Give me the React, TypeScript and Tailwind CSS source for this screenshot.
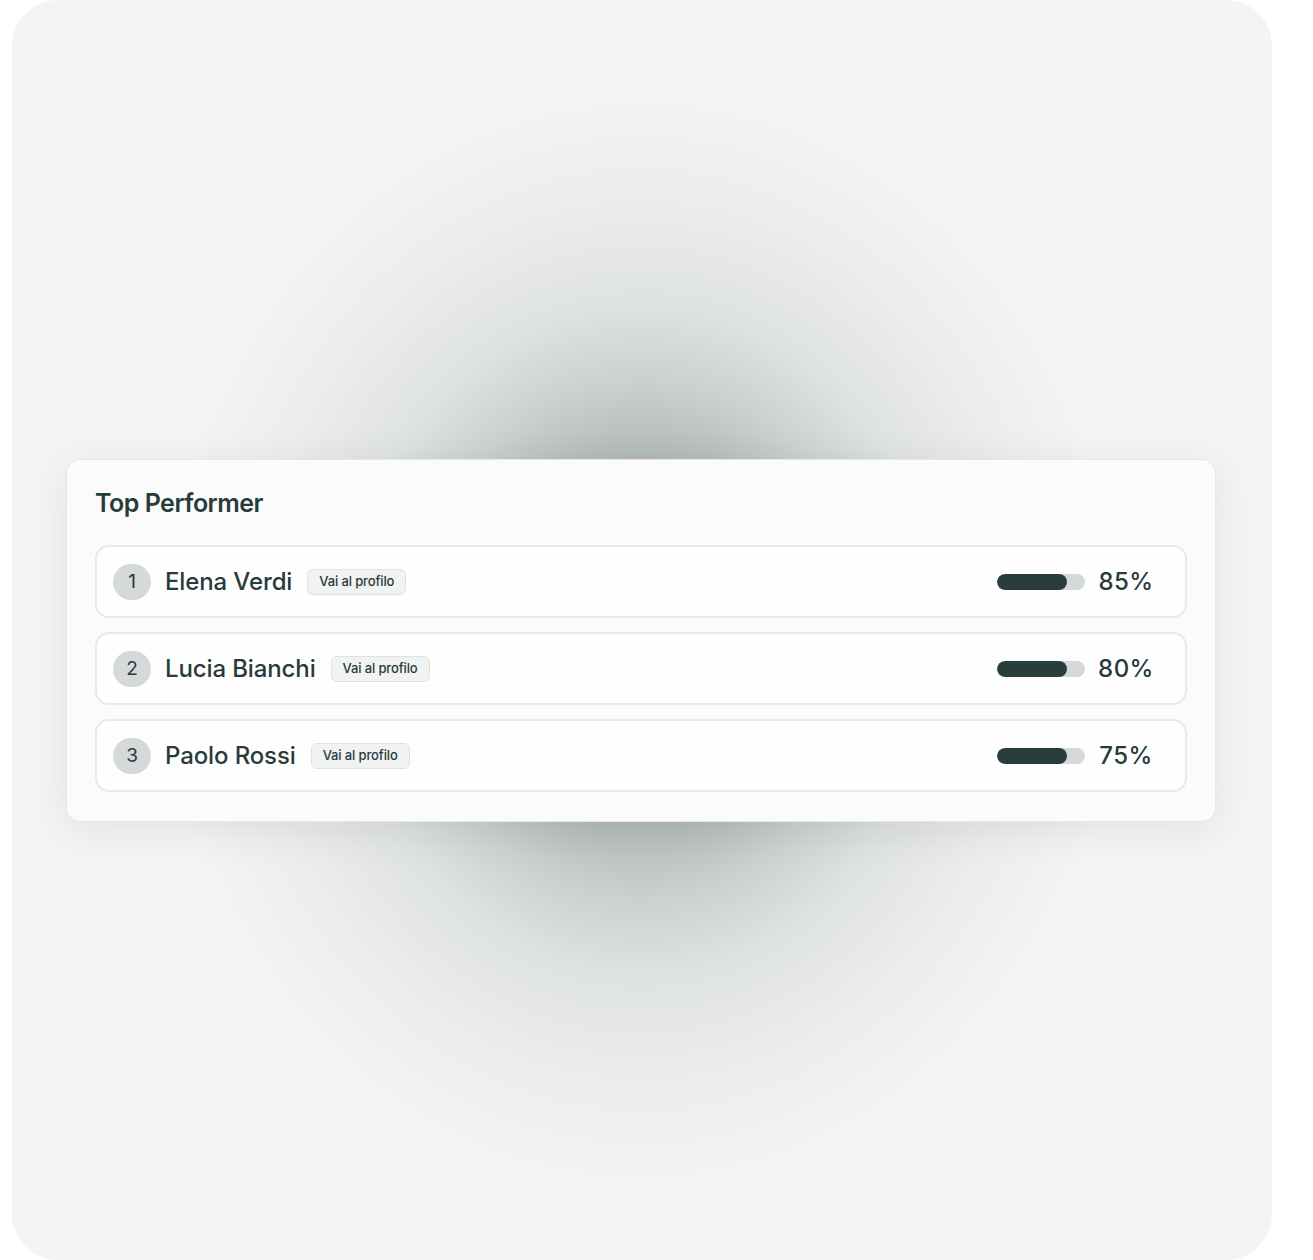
import React from "react";

const people = [
  { rank: 1, name: "Elena Verdi", pct: "85%" },
  { rank: 2, name: "Lucia Bianchi", pct: "80%" },
  { rank: 3, name: "Paolo Rossi", pct: "75%" },
];

export default function App() {
  return (
    <div className="min-h-[1260px] w-[1313px] bg-white" style={{ fontFamily: "Inter, 'Noto Sans', sans-serif" }}>
      <div className="ml-[12px] flex h-[1260px] w-[1260px] flex-col items-center justify-center rounded-[46px] bg-[#f3f4f3] bg-[radial-gradient(ellipse_480px_550px_at_629px_640px,#8f9999_0%,#b2b9b9_33%,#cbd0d0_47%,#dfe2e2_61%,#ebedec_80%,#f3f4f3_100%)] pt-[21px]">
        <div className="-ml-[2px] w-[1150px] rounded-[14px] border border-[#e6e8e8] bg-[#fbfbfb] px-[28px] pb-[29px] pt-[27px] shadow-[0_8px_40px_rgba(0,0,0,0.08)]">
          <h2 className="text-[25px] font-semibold leading-[32px] tracking-[-0.02em] text-[#283b3b]">Top Performer</h2>
          <div className="mt-[26px] flex flex-col gap-[14px]">
            {people.map((p) => (
              <div
                key={p.rank}
                className="flex h-[73px] items-center rounded-[14px] border-2 border-[#e8eaea] bg-[#fefefe] pl-[16px] pr-[28px]"
              >
                <div className="flex h-[36px] w-[38px] items-center justify-center rounded-full bg-[#d5d9d9] pt-[1px] text-[19px] text-[#283b3b]">
                  {p.rank}
                </div>
                <div className="ml-[14px] text-[24px] font-medium tracking-[-0.005em] text-[#283b3b]">{p.name}</div>
                <div className="ml-[15px] flex h-[26px] items-center rounded-[6px] border border-[#dfe2e2] bg-[#f1f3f2] px-[11px] text-[13px] font-medium tracking-[-0.01em] text-[#283b3b]">
                  Vai al profilo
                </div>
                <div className="ml-auto flex items-center">
                  <div className="h-[16px] w-[88px] overflow-hidden rounded-full bg-[#d5d9d9]">
                    <div className="h-full w-[70px] rounded-full bg-[#2a3d3d]" />
                  </div>
                  <div className="ml-[10px] w-[62px] text-center text-[24px] font-medium tracking-[0.02em] text-[#283b3b]">
                    {p.pct}
                  </div>
                </div>
              </div>
            ))}
          </div>
        </div>
      </div>
    </div>
  );
}
